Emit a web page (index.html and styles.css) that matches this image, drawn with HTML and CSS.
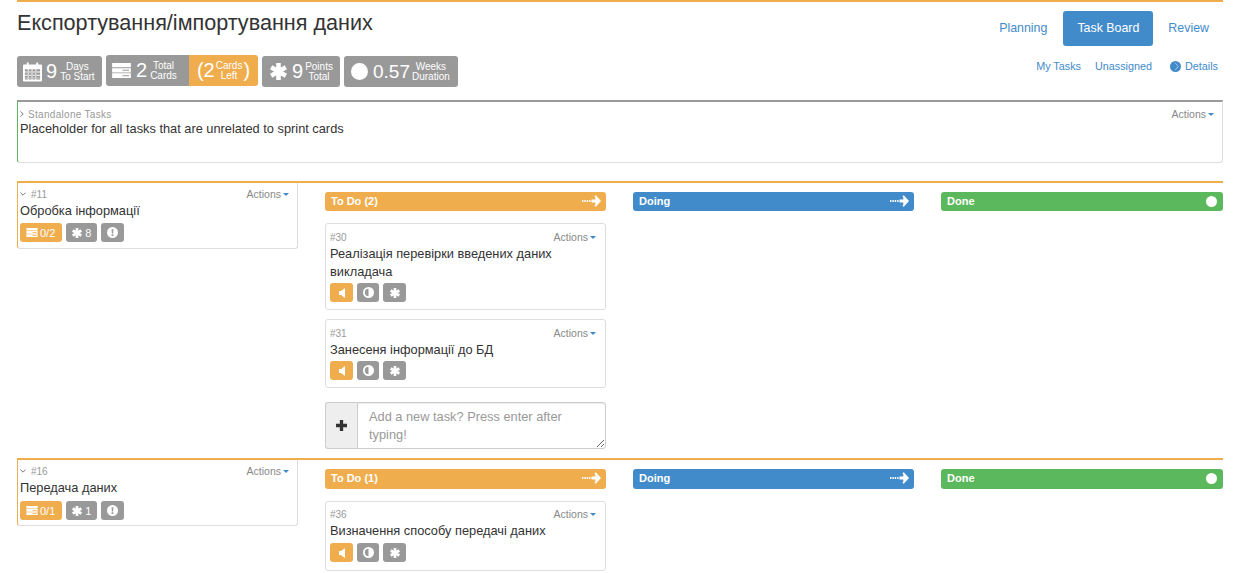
FILE: index.html
```html
<!DOCTYPE html>
<html lang="uk">
<head>
<meta charset="utf-8">
<title>Task Board</title>
<link rel="stylesheet" href="styles.css">
</head>
<body>
<svg class="defs" aria-hidden="true">
  <symbol id="i-cal" viewBox="0 0 20 20"><path fill="currentColor" fill-rule="evenodd" d="M4 0h2v2h8V0h2v2h3a1 1 0 0 1 1 1v16a1 1 0 0 1-1 1H1a1 1 0 0 1-1-1V3a1 1 0 0 1 1-1h3zM2 7v11h16V7zM2 9.500h16v1H2zM2 13h16v1H2zM2 16h16v.6H2zM5 7h1v11H5zM9 7h1v11H9zM13 7h1v11h-1z"/></symbol>
  <symbol id="i-tasks" viewBox="0 0 20 16"><path fill="currentColor" fill-rule="evenodd" d="M0 0h20v4.500H0zM0 5.500h20V10H0zM0 11h20v5H0zM11 7.300h7v1h-7zM11 13h7v1h-7z"/></symbol>
  <symbol id="i-star" viewBox="0 0 20 20"><path fill="none" stroke="currentColor" stroke-width="5.400" d="M10 0v20M1.300 5l17.400 10M1.300 15L18.700 5"/></symbol>
  <symbol id="i-circle" viewBox="0 0 20 20"><circle cx="10" cy="10" r="10" fill="currentColor"/></symbol>
  <symbol id="i-arrow" viewBox="0 0 20 12"><path fill="currentColor" d="M0 5h1.500v2H0zM2.500 5H4v2H2.500zM5 5h1.500v2H5zM7.500 5H9v2H7.500zM10 4.500h4V2l-1-1 1.500-1L20 6l-5.500 6-1.500-1 1-1V7.500h-4z"/></symbol>
  <symbol id="i-sound" viewBox="0 0 6 10"><path fill="currentColor" d="M0 3h2l4-3v10L2 7H0z"/></symbol>
  <symbol id="i-adjust" viewBox="0 0 12 12"><path fill="currentColor" fill-rule="evenodd" d="M6 0a6 6 0 1 1 0 12A6 6 0 0 1 6 0zm0 2a4 4 0 0 0 0 8z"/></symbol>
  <symbol id="i-alert" viewBox="0 0 12 12"><path fill="currentColor" fill-rule="evenodd" d="M6 0a6 6 0 1 1 0 12A6 6 0 0 1 6 0zM5 2.500l.3 4.500h1.400L7 2.500zM5 8v1.700h2V8z"/></symbol>
  <symbol id="i-caret" viewBox="0 0 6 3"><path fill="currentColor" d="M0 0h6L3 3z"/></symbol>
  <symbol id="i-details" viewBox="0 0 12 12"><circle cx="6" cy="6" r="6" fill="currentColor"/><path fill="none" stroke="#a9cdec" d="M5.500 2L9 6l-3.500 4"/></symbol>
  <symbol id="i-plus" viewBox="0 0 10 10"><path fill="currentColor" d="M3.500 0h3v3.500H10v3H6.500V10h-3V6.500H0v-3h3.500z"/></symbol>
  <symbol id="i-chev-down" viewBox="0 0 6 4"><path fill="none" stroke="currentColor" d="M.4.6L3 3.200 5.600.6"/></symbol>
  <symbol id="i-chev-right" viewBox="0 0 4 6"><path fill="none" stroke="currentColor" d="M.6.4L3.200 3 .6 5.600"/></symbol>
</svg>

<main class="page">
  <header class="top">
    <div class="top-left">
      <h1 class="title">Експортування/імпортування даних</h1>
      <div class="stats">
        <div class="stat stat-days">
          <svg class="stat-icon icon-cal"><use href="#i-cal"/></svg>
          <span class="stat-num">9</span>
          <span class="stat-label">Days<br>To Start</span>
        </div>
        <div class="stat-group">
          <div class="stat stat-cards">
            <svg class="stat-icon icon-tasks"><use href="#i-tasks"/></svg>
            <span class="stat-num">2</span>
            <span class="stat-label">Total<br>Cards</span>
          </div>
          <div class="stat-left">
            <span class="stat-num">(2</span>
            <span class="stat-label">Cards<br>Left</span>
            <span class="stat-num">)</span>
          </div>
        </div>
        <div class="stat stat-points">
          <svg class="stat-icon icon-star"><use href="#i-star"/></svg>
          <span class="stat-num">9</span>
          <span class="stat-label">Points<br>Total</span>
        </div>
        <div class="stat stat-weeks">
          <svg class="stat-icon icon-circle"><use href="#i-circle"/></svg>
          <span class="stat-num">0.57</span>
          <span class="stat-label">Weeks<br>Duration</span>
        </div>
      </div>
    </div>
    <div class="top-right">
      <nav class="pills">
        <a class="pill">Planning</a>
        <a class="pill pill-active">Task Board</a>
        <a class="pill">Review</a>
      </nav>
      <nav class="sublinks">
        <a class="sublink">My Tasks</a>
        <a class="sublink">Unassigned</a>
        <a class="sublink sublink-details"><svg class="details-icon"><use href="#i-details"/></svg>Details</a>
      </nav>
    </div>
  </header>

  <section class="standalone">
    <div class="meta">
      <span class="meta-id standalone-label"><svg class="chev-right"><use href="#i-chev-right"/></svg>Standalone Tasks</span>
      <span class="actions">Actions<svg class="caret"><use href="#i-caret"/></svg></span>
    </div>
    <p class="text">Placeholder for all tasks that are unrelated to sprint cards</p>
  </section>

  <section class="row row-first">
    <article class="story">
      <div class="meta">
        <span class="meta-id"><svg class="chev-down"><use href="#i-chev-down"/></svg>#11</span>
        <span class="actions">Actions<svg class="caret"><use href="#i-caret"/></svg></span>
      </div>
      <p class="text">Обробка інформації</p>
      <div class="badges">
        <span class="badge badge-orange"><svg class="b-tasks"><use href="#i-tasks"/></svg>0/2</span>
        <span class="badge badge-points"><svg class="b-star"><use href="#i-star"/></svg>8</span>
        <span class="badge badge-icon"><svg class="b-round"><use href="#i-alert"/></svg></span>
      </div>
    </article>
    <div class="col">
      <div class="col-head head-orange"><span>To Do (2)</span><svg class="head-arrow"><use href="#i-arrow"/></svg></div>
      <article class="task">
        <div class="meta"><span class="meta-id">#30</span><span class="actions">Actions<svg class="caret"><use href="#i-caret"/></svg></span></div>
        <p class="text">Реалізація перевірки введених даних викладача</p>
        <div class="badges">
          <span class="badge badge-orange badge-icon"><svg class="b-sound"><use href="#i-sound"/></svg></span>
          <span class="badge badge-icon badge-narrow"><svg class="b-round"><use href="#i-adjust"/></svg></span>
          <span class="badge badge-icon"><svg class="b-star"><use href="#i-star"/></svg></span>
        </div>
      </article>
      <article class="task">
        <div class="meta"><span class="meta-id">#31</span><span class="actions">Actions<svg class="caret"><use href="#i-caret"/></svg></span></div>
        <p class="text">Занесеня інформації до БД</p>
        <div class="badges">
          <span class="badge badge-orange badge-icon"><svg class="b-sound"><use href="#i-sound"/></svg></span>
          <span class="badge badge-icon badge-narrow"><svg class="b-round"><use href="#i-adjust"/></svg></span>
          <span class="badge badge-icon"><svg class="b-star"><use href="#i-star"/></svg></span>
        </div>
      </article>
      <div class="add-task">
        <span class="add-icon"><svg class="plus"><use href="#i-plus"/></svg></span>
        <textarea class="add-input" placeholder="Add a new task? Press enter after typing!"></textarea>
      </div>
    </div>
    <div class="col">
      <div class="col-head head-blue"><span>Doing</span><svg class="head-arrow"><use href="#i-arrow"/></svg></div>
    </div>
    <div class="col">
      <div class="col-head head-green"><span>Done</span><svg class="head-dot"><use href="#i-circle"/></svg></div>
    </div>
  </section>

  <section class="row row-second">
    <article class="story">
      <div class="meta">
        <span class="meta-id"><svg class="chev-down"><use href="#i-chev-down"/></svg>#16</span>
        <span class="actions">Actions<svg class="caret"><use href="#i-caret"/></svg></span>
      </div>
      <p class="text">Передача даних</p>
      <div class="badges">
        <span class="badge badge-orange"><svg class="b-tasks"><use href="#i-tasks"/></svg>0/1</span>
        <span class="badge badge-points"><svg class="b-star"><use href="#i-star"/></svg>1</span>
        <span class="badge badge-icon"><svg class="b-round"><use href="#i-alert"/></svg></span>
      </div>
    </article>
    <div class="col">
      <div class="col-head head-orange"><span>To Do (1)</span><svg class="head-arrow"><use href="#i-arrow"/></svg></div>
      <article class="task">
        <div class="meta"><span class="meta-id">#36</span><span class="actions">Actions<svg class="caret"><use href="#i-caret"/></svg></span></div>
        <p class="text">Визначення способу передачі даних</p>
        <div class="badges">
          <span class="badge badge-orange badge-icon"><svg class="b-sound"><use href="#i-sound"/></svg></span>
          <span class="badge badge-icon badge-narrow"><svg class="b-round"><use href="#i-adjust"/></svg></span>
          <span class="badge badge-icon"><svg class="b-star"><use href="#i-star"/></svg></span>
        </div>
      </article>
    </div>
    <div class="col">
      <div class="col-head head-blue"><span>Doing</span><svg class="head-arrow"><use href="#i-arrow"/></svg></div>
    </div>
    <div class="col">
      <div class="col-head head-green"><span>Done</span><svg class="head-dot"><use href="#i-circle"/></svg></div>
    </div>
  </section>
</main>
</body>
</html>
```
FILE: styles.css
```css
* { box-sizing: border-box; }
html, body { margin: 0; height: 100%; overflow: hidden; }
body {
  font-family: "Liberation Sans", Arial, sans-serif;
  color: #333;
  background: #fff;
  font-size: 12px;
}
.defs { display: none; }
svg { display: block; flex: none; }

.page { margin: 0 32px 0 17px; }

.top {
  display: flex;
  justify-content: space-between;
  border-top: 2px solid #f0ad4e;
}
.title {
  margin: 0;
  height: 53px;
  padding-top: 7px;
  font-size: 21.600px;
  line-height: 27px;
  font-weight: 400;
}
.stats { display: flex; gap: 4px; align-items: flex-start; }
.stat {
  display: flex;
  align-items: center;
  height: 31px;
  margin-top: 1px;
  background: #999;
  color: #fff;
  border-radius: 3px;
  padding: 0 6px;
}
.stat-days { width: 85px; }
.stat-points { width: 78px; padding-left: 8px; }
.stat-weeks { width: 114px; padding-left: 7px; }
.stat-group { display: flex; }
.stat-group .stat {
  width: 83px;
  margin-top: 0;
  border-radius: 3px 0 0 3px;
}
.stat-left {
  display: flex;
  align-items: center;
  justify-content: center;
  width: 69px;
  height: 31px;
  background: #f0ad4e;
  color: #fff;
  border-radius: 0 3px 3px 0;
}
.stat-icon { color: #fff; margin-right: 5px; }
.icon-cal { width: 19px; height: 20px; margin-right: 4px; }
.icon-tasks { width: 19px; height: 15px; margin-right: 5px; }
.icon-star { width: 17px; height: 17px; }
.icon-circle { width: 17px; height: 17px; }
.stat-num { font-size: 20px; line-height: 31px; }
.stat-weeks .stat-num { font-size: 19px; }
.stat-label {
  font-size: 10px;
  line-height: 10px;
  text-align: center;
  margin-left: 3px;
  white-space: nowrap;
}
.stat-points .stat-label { margin-left: 2px; }
.stat-weeks .stat-label { margin-left: 2px; }
.stat-left .stat-label { margin: 0 1px; }

.top-right {
  display: flex;
  flex-direction: column;
  align-items: flex-end;
}
.pills { display: flex; gap: 1px; margin-top: 9px; }
.pill {
  padding: 0 14px;
  height: 35px;
  line-height: 34px;
  font-size: 12.400px;
  color: #428bca;
  border-radius: 3px;
}
.pill:first-child { margin-right: 1px; }
.pill-active { background: #428bca; color: #fff; }
.sublinks {
  display: flex;
  align-items: center;
  gap: 14px;
  margin-top: 13px;
  margin-right: 5px;
  font-size: 10.800px;
  line-height: 14px;
  color: #428bca;
}
.sublink-details { display: flex; align-items: center; margin-left: 4px; }
.details-icon { width: 11px; height: 11px; margin-right: 4px; }

.standalone {
  height: 63px;
  margin-top: 13px;
  border: 1px solid #ddd;
  border-top: 2px solid #999;
  border-left-color: #5cb85c;
  border-radius: 0 0 3px 3px;
  padding: 6px 8px 0 2px;
}
.meta {
  display: flex;
  justify-content: space-between;
  align-items: center;
  height: 12px;
  font-size: 10px;
  color: #999;
}
.meta-id { display: flex; align-items: center; white-space: nowrap; }
.standalone-label { letter-spacing: .3px; }
.chev-right { width: 4px; height: 6px; margin-right: 4px; color: #777; }
.chev-down { width: 6px; height: 4px; margin-right: 5px; color: #777; }
.actions { display: flex; align-items: center; font-size: 10.500px; letter-spacing: 0; color: #888; }
.caret { width: 6px; height: 3px; margin-left: 2px; color: #428bca; }
.text { margin: 2px 0 0; font-size: 12.800px; line-height: 18px; color: #333; }
.standalone .text { margin-top: 0; }

.row {
  display: grid;
  grid-template-columns: 281px 281px 281px 1fr;
  column-gap: 27px;
  align-items: start;
  margin-top: 18px;
  border-top: 2px solid #f0ad4e;
}
.row + .row { margin-top: 9px; }
.story {
  height: 66px;
  border: 1px solid #ddd;
  border-top: 0;
  border-left-color: #f0ad4e;
  border-radius: 0 0 3px 3px;
  padding: 5px 8px 0 2px;
}
.badges { display: flex; gap: 4px; margin-top: 3px; }
.row-second .story .badges { margin-top: 4px; }
.badge {
  display: flex;
  align-items: center;
  justify-content: center;
  gap: 2px;
  height: 19px;
  padding: 0 7px 0 6px;
  background: #999;
  color: #fff;
  border-radius: 3px;
  font-size: 11px;
  white-space: nowrap;
}
.badge-orange { background: #f0ad4e; }
.badge-points { gap: 3px; padding: 0 6px; }
.badge-icon { width: 23px; padding: 0; }
.badge-narrow { width: 22px; }
.b-tasks { width: 12px; height: 9px; }
.b-star { width: 10px; height: 10px; }
.b-round { width: 11px; height: 11px; }
.b-sound { width: 6px; height: 10px; }

.col { padding-top: 9px; min-width: 0; }
.col-head {
  display: flex;
  align-items: center;
  justify-content: space-between;
  height: 19px;
  padding: 0 5px 1px 6px;
  border-radius: 3px;
  color: #fff;
  font-size: 11px;
  font-weight: 700;
}
.row-second .col-head { height: 20px; padding-bottom: 2px; }
.head-orange { background: #f0ad4e; }
.head-blue { background: #428bca; }
.head-green { background: #5cb85c; }
.head-arrow { width: 19px; height: 12px; }
.head-dot { width: 11px; height: 11px; margin-right: 1px; }

.task {
  margin-top: 12px;
  border: 1px solid #ddd;
  border-radius: 3px;
  padding: 6px 9px 8px 4px;
}
.task + .task { margin-top: 9px; }
.row-first .task { padding-top: 7px; padding-bottom: 7px; }
.row-first .task .badges { margin-top: 2px; }

.add-task {
  display: flex;
  height: 47px;
  margin-top: 14px;
}
.add-icon {
  display: flex;
  align-items: center;
  justify-content: center;
  width: 32px;
  background: #eee;
  border: 1px solid #ccc;
  border-right: 0;
  border-radius: 3px 0 0 3px;
  color: #333;
}
.plus { width: 11px; height: 11px; }
.add-input {
  flex: 1;
  min-width: 0;
  height: 47px;
  margin: 0;
  padding: 5px 11px;
  border: 1px solid #ccc;
  border-radius: 0 3px 3px 0;
  box-shadow: inset 0 1px 1px rgba(0,0,0,.075);
  font-family: inherit;
  font-size: 12.800px;
  line-height: 18px;
  color: #555;
  outline: 0;
}
.add-input::placeholder { color: #999; opacity: 1; }
```
